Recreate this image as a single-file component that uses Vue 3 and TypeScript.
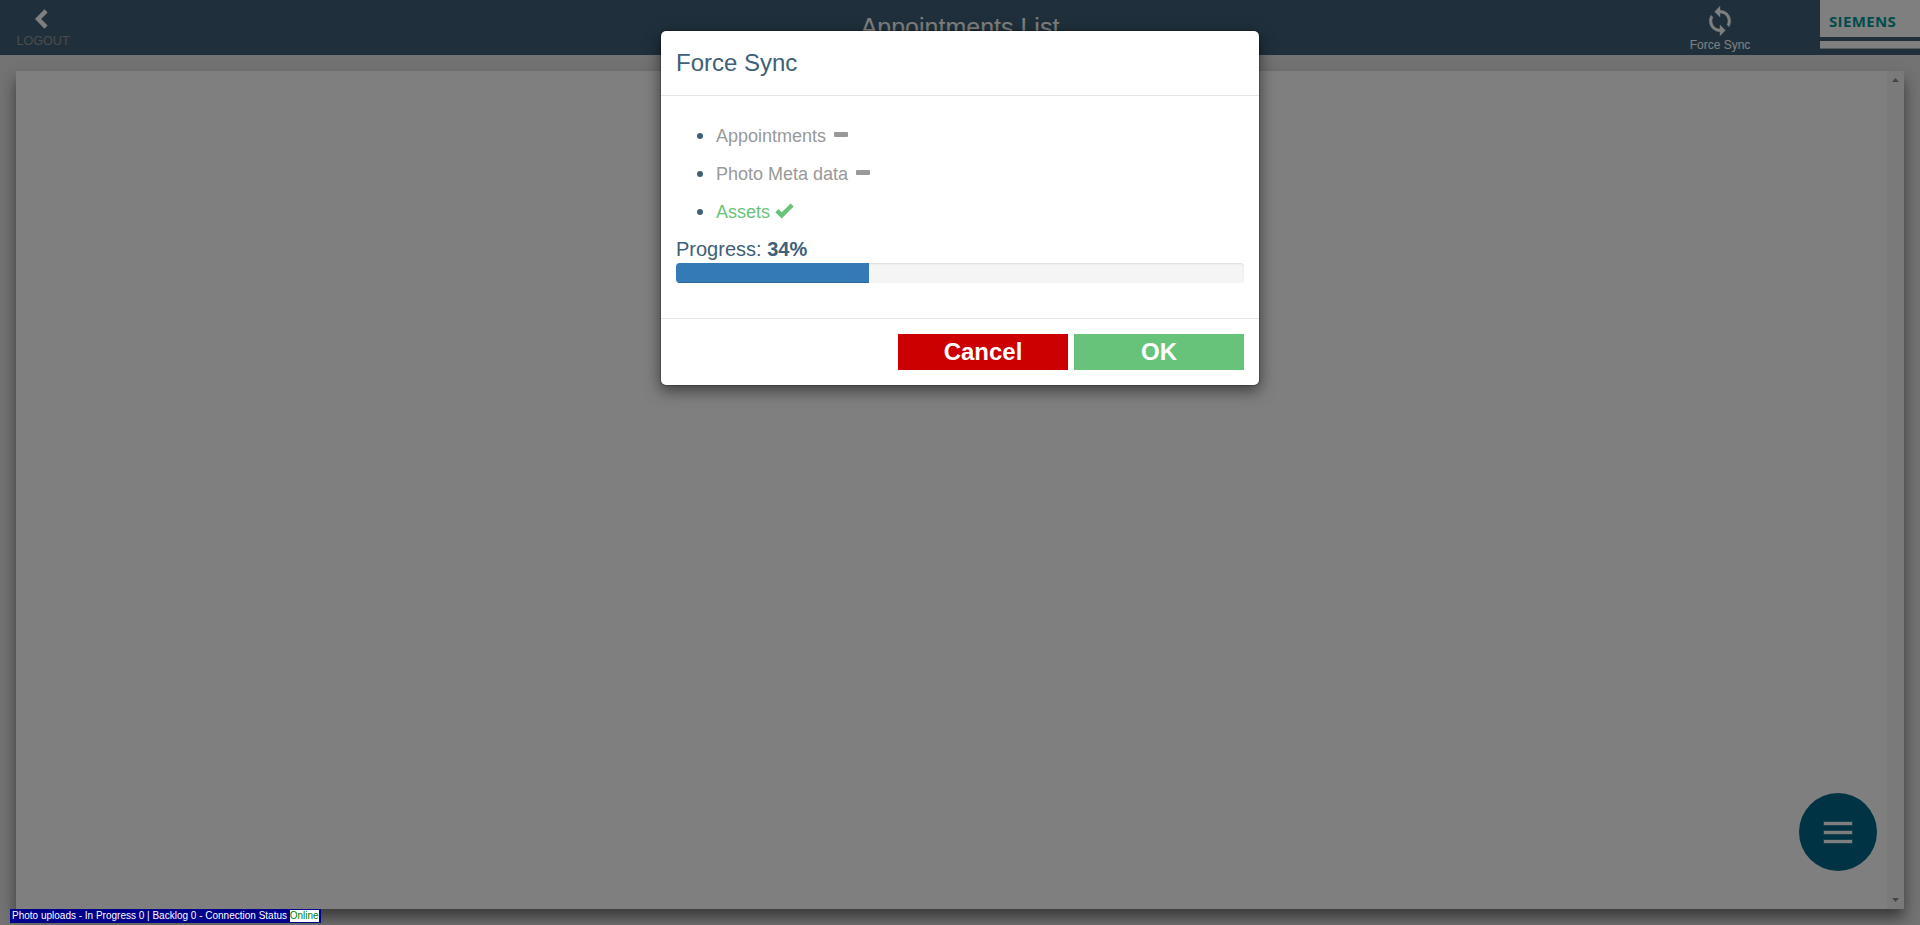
<script setup lang="ts">
import { ref } from 'vue'

interface SyncStep {
  label: string
  done: boolean
}

const steps = ref<SyncStep[]>([
  { label: 'Appointments', done: false },
  { label: 'Photo Meta data', done: false },
  { label: 'Assets', done: true },
])
const progress = ref(34)
const inProgress = ref(0)
const backlog = ref(0)
</script>

<template>
  <div class="page">
    <header class="topbar">
      <a class="logout">
        <svg class="chevron" width="13" height="20" viewBox="0 0 13 20"><path d="M9.5 0.3 L12.6 3.4 L6.1 10 L12.6 16.6 L9.5 19.7 L0 10 Z" fill="#fff" /></svg>
        <span>LOGOUT</span>
      </a>
      <h1>Appointments List</h1>
      <div class="sync">
        <svg width="32" height="32" viewBox="0 0 24 24"><path fill="#fff" stroke="#fff" stroke-width="0.3" d="M12 4V1L8 5l4 4V6c3.31 0 6 2.69 6 6 0 1.01-.25 1.97-.7 2.8l1.46 1.46C19.54 15.03 20 13.57 20 12c0-4.42-3.58-8-8-8zm0 14c-3.31 0-6-2.69-6-6 0-1.01.25-1.97.7-2.8L5.24 7.74C4.46 8.97 4 10.43 4 12c0 4.42 3.58 8 8 8v3l4-4-4-4v3z" /></svg>
        <span>Force Sync</span>
      </div>
      <div class="brand">
        <div class="brand-name">SIEMENS</div>
        <div class="brand-band"></div>
      </div>
    </header>

    <main class="panel">
      <div class="scrollbar">
        <svg width="7" height="4" viewBox="0 0 7 4"><path d="M0 4 L3.5 0 L7 4 Z" fill="#8c8c8c" /></svg>
        <svg width="7" height="4" viewBox="0 0 7 4"><path d="M0 0 L3.5 4 L7 0 Z" fill="#8c8c8c" /></svg>
      </div>
    </main>

    <button class="fab" aria-label="Menu"><i></i><i></i><i></i></button>

    <div class="backdrop">
      <section class="modal">
        <div class="modal-header"><h4>Force Sync</h4></div>
        <div class="modal-body">
          <ul>
            <li v-for="step in steps" :key="step.label">
              <span class="step" :class="{ done: step.done }">
                {{ step.label }}
                <svg v-if="step.done" class="check" width="19" height="16" viewBox="0 0 19 16"><path d="M0.3 9.2 L3.5 6 L6.7 9.2 L15.6 0.4 L18.7 3.5 L6.7 15.4 Z" fill="currentColor" /></svg>
                <svg v-else class="minus" width="14" height="5" viewBox="0 0 14 5"><rect width="14" height="5" rx="1" fill="currentColor" /></svg>
              </span>
            </li>
          </ul>
          <div class="progress-label">Progress: <b>{{ progress }}%</b></div>
          <div class="progress"><div class="bar" :style="{ width: progress + '%' }"></div></div>
        </div>
        <div class="modal-footer">
          <button class="cancel">Cancel</button>
          <button class="ok">OK</button>
        </div>
      </section>
    </div>

    <div class="status">Photo uploads - In Progress {{ inProgress }} | Backlog {{ backlog }} - Connection Status <span>Online</span></div>
  </div>
</template>

<style>
body {
  margin: 0;
  overflow: hidden;
}
</style>

<style scoped>
* {
  box-sizing: border-box;
}
.page {
  position: relative;
  display: flex;
  flex-direction: column;
  height: 925px;
  overflow: hidden;
  background: #e6e6e6;
  font-family: "Liberation Sans", Arial, sans-serif;
  color: #3e6078;
}
.topbar {
  display: grid;
  grid-template-columns: 86px 1fr 86px;
  position: relative;
  height: 55px;
  flex: none;
  background: #3e6078;
  color: #fff;
}
.logout {
  display: flex;
  flex-direction: column;
  align-items: center;
  padding-top: 9px;
  font-size: 12.6px;
  line-height: 16px;
  color: #999;
}
.chevron {
  margin: 0 3px 4px 0;
}
h1 {
  margin: 0;
  padding-top: 12px;
  font-size: 25px;
  font-weight: 400;
  line-height: 30px;
  text-align: center;
}
.sync {
  position: absolute;
  top: 5px;
  left: 1690px;
  width: 60px;
  display: flex;
  flex-direction: column;
  align-items: center;
  font-size: 12px;
  line-height: 17px;
  white-space: nowrap;
}
.brand {
  position: absolute;
  top: 0;
  right: 0;
  width: 100px;
}
.brand-name {
  height: 37px;
  padding-left: 9px;
  background: #fff;
  color: #009999;
  font: 700 15px/43px "Open Sans", sans-serif;
  letter-spacing: 0.35px;
}
.brand-band {
  height: 8px;
  margin-top: 4px;
  background: #fff;
  border-bottom: 1px solid #a9b8c0;
}
.panel {
  display: flex;
  justify-content: flex-end;
  flex: 1;
  margin: 16px;
  background: #fff;
  box-shadow: 0 9px 14px rgba(0, 0, 0, 0.5);
}
.scrollbar {
  width: 17px;
  padding: 7px 5px;
  display: flex;
  flex-direction: column;
  justify-content: space-between;
  background: #f5f5f5;
}
.fab {
  position: absolute;
  left: 1799px;
  top: 793px;
  width: 78px;
  height: 78px;
  padding: 0;
  border: 0;
  border-radius: 50%;
  background: #006688;
  display: flex;
  flex-direction: column;
  align-items: center;
  justify-content: center;
  gap: 6px;
}
.fab i {
  width: 28px;
  height: 3px;
  background: #fff;
  box-shadow: 0 0 0 1px rgba(255, 255, 255, 0.2);
}
.backdrop {
  position: absolute;
  inset: 0;
  display: flex;
  justify-content: center;
  align-items: flex-start;
  padding-top: 30px;
  background: rgba(0, 0, 0, 0.5);
}
.modal {
  width: 600px;
  border: 1px solid rgba(0, 0, 0, 0.2);
  border-radius: 6px;
  background: #fff;
  background-clip: padding-box;
  box-shadow: 0 5px 15px rgba(0, 0, 0, 0.5);
}
.modal-header {
  padding: 15px;
  border-bottom: 1px solid #e5e5e5;
}
h4 {
  margin: 0;
  font-size: 24px;
  font-weight: 400;
  line-height: 34px;
}
.modal-body {
  padding: 15px 15px 35px;
  font-size: 20px;
}
ul {
  margin: 5px 0 6px;
  padding-left: 40px;
}
li {
  height: 38px;
  line-height: 38px;
  font-size: 20px;
}
.step {
  font-size: 18px;
  color: #999;
}
.step.done {
  color: #68c37a;
}
.minus {
  margin-left: 3px;
  vertical-align: 5px;
}
.check {
  vertical-align: -1px;
}
.progress-label {
  height: 27px;
  line-height: 27px;
}
.progress {
  height: 20px;
  overflow: hidden;
  border-radius: 4px;
  background: #f5f5f5;
  box-shadow: inset 0 1px 2px rgba(0, 0, 0, 0.1);
}
.bar {
  height: 100%;
  background: #337ab7;
  box-shadow: inset 0 -1px 0 rgba(0, 0, 0, 0.15);
}
.modal-footer {
  display: flex;
  justify-content: flex-end;
  gap: 6px;
  padding: 15px;
  border-top: 1px solid #e5e5e5;
}
.modal-footer button {
  width: 170px;
  height: 36px;
  padding: 0;
  border: 0;
  color: #fff;
  font: bold 24px/36px "Liberation Sans", Arial, sans-serif;
}
.cancel {
  background: #c00;
}
.ok {
  background: #68c37a;
}
.status {
  position: absolute;
  left: 10px;
  top: 909px;
  height: 14px;
  padding: 1px 2px;
  background: #00008b;
  color: #fff;
  font-size: 10px;
  line-height: 12px;
  white-space: nowrap;
}
.status span {
  display: inline-block;
  height: 12px;
  background: #fff;
  color: green;
}
</style>
